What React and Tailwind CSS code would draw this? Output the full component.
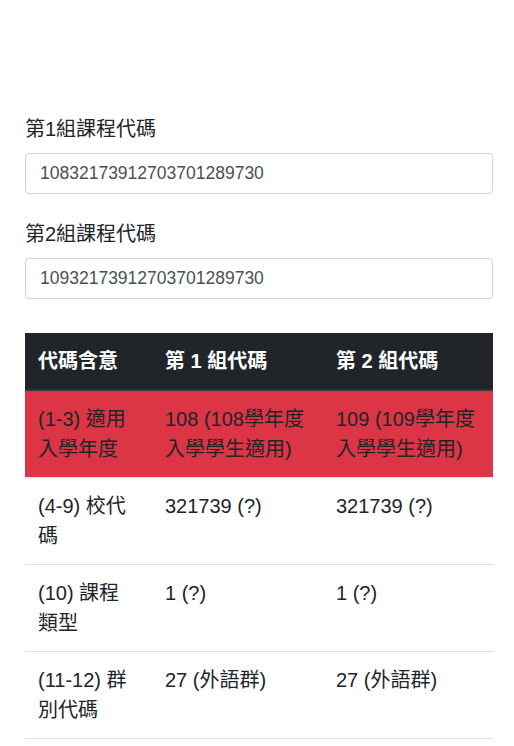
const FONT = '"Liberation Sans", Arial, "Noto Sans CJK TC", sans-serif';

const GROUPS = [
    { label: '第1組課程代碼', value: '10832173912703701289730' },
    { label: '第2組課程代碼', value: '10932173912703701289730' },
];

const ROWS = [
    { meaning: '(1-3) 適用入學年度', a: '108 (108學年度入學學生適用)', b: '109 (109學年度入學學生適用)', danger: true },
    { meaning: '(4-9) 校代碼', a: '321739 (?)', b: '321739 (?)' },
    { meaning: '(10) 課程類型', a: '1 (?)', b: '1 (?)' },
    { meaning: '(11-12) 群別代碼', a: '27 (外語群)', b: '27 (外語群)' },
];

export default function App() {
    return (
        <div className="min-h-[746px] bg-white pl-[25px] pr-[21px] pt-[114px] text-[#212529]" style={{ fontFamily: FONT }}>
            {GROUPS.map((g) => (
                <div key={g.label} className="mb-[25px]">
                    <label className="mb-[9px] block text-[20px] leading-[30px]">{g.label}</label>
                    <input
                        readOnly
                        value={g.value}
                        className="block h-[41px] w-full rounded-[4px] border border-[#ced4da] px-[14px] text-[17.5px] text-[#495057] outline-none"
                        style={{ fontFamily: FONT }}
                    />
                </div>
            ))}
            <div className="pt-[9px]">
                <table className="w-full border-collapse text-left text-[20px] leading-[30px]">
                    <thead>
                        <tr className="bg-[#212529] text-white">
                            <th className="w-[127px] border-b-2 border-[#32383e] p-[13px] font-bold">代碼含意</th>
                            <th className="w-[171px] border-b-2 border-[#32383e] p-[13px] font-bold">第 1 組代碼</th>
                            <th className="border-b-2 border-[#32383e] p-[13px] font-bold">第 2 組代碼</th>
                        </tr>
                    </thead>
                    <tbody>
                        {ROWS.map((r) => (
                            <tr key={r.meaning} className={r.danger ? 'bg-[#dc3545]' : ''}>
                                <td className="border-b border-[#dee2e6] p-[13px] align-top">{r.meaning}</td>
                                <td className="border-b border-[#dee2e6] p-[13px] align-top">{r.a}</td>
                                <td className="border-b border-[#dee2e6] p-[13px] align-top">{r.b}</td>
                            </tr>
                        ))}
                    </tbody>
                </table>
            </div>
        </div>
    );
}
